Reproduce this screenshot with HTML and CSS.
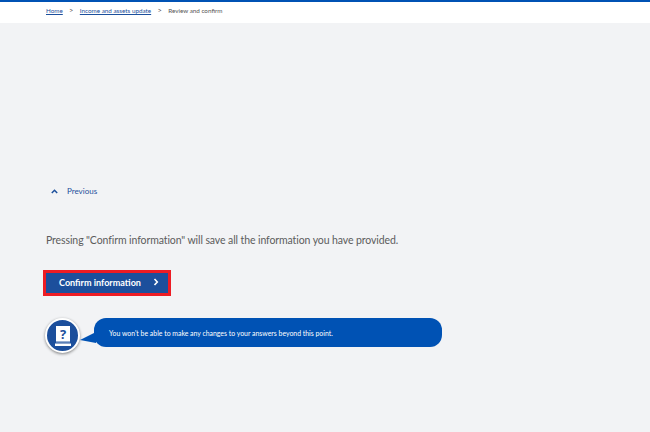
FILE: index.html
```html
<!DOCTYPE html>
<html lang="en">
<head>
<meta charset="utf-8">
<title>Review and confirm</title>
<link rel="stylesheet" href="styles.css">
</head>
<body>
<header class="topbar">
  <nav class="crumbs">
    <a href="#">Home</a><span class="sep">&gt;</span><a href="#">Income and assets update</a><span class="sep">&gt;</span><span class="current">Review and confirm</span>
  </nav>
</header>
<main class="content">
  <a class="prev" href="#">
    <svg class="prev-icon" width="7" height="5" viewBox="0 0 7 5"><path d="M.8 4 3.500 1.300 6.200 4" fill="none" stroke="#1c4f9c" stroke-width="1.500"/></svg>
    <span>Previous</span>
  </a>
  <p class="lead">Pressing "Confirm information" will save all the information you have provided.</p>
  <button class="btn">
    <span>Confirm information</span>
    <svg width="6" height="8" viewBox="0 0 6 8"><path d="M1.500 1 4.300 4 1.500 7" fill="none" stroke="#fff" stroke-width="1.600"/></svg>
  </button>
  <div class="helper">
    <div class="avatar">
      <svg width="20" height="24" viewBox="0 0 20 24">
        <path d="M3 2h14v15H3z" fill="#fff"/>
        <path d="M2 19.500h16v2.500H2z" fill="#fff"/>
        <path d="M3 17h14v1.500H3z" fill="#fff" opacity=".55"/>
        <text x="10" y="14.500" text-anchor="middle" class="q">?</text>
      </svg>
    </div>
    <div class="bubble">
      <svg class="tail" width="16" height="12" viewBox="0 0 16 12"><path d="M0 8 16 0v11z" fill="#0052b4"/></svg>
      You won't be able to make any changes to your answers beyond this point.
    </div>
  </div>
</main>
</body>
</html>
```
FILE: styles.css
```css
* { box-sizing: border-box; }
html, body { margin: 0; height: 100%; }
body { background: #f2f3f5; font-family: Lato, "Open Sans", sans-serif; overflow: hidden; }
.topbar { height: 23px; background: #fff; border-top: 2px solid #0052b4; padding: 4px 0 0 46px; }
.crumbs { display: flex; align-items: center; font-size: 6.300px; line-height: 10px; color: #555; }
.crumbs a { color: #1c4f9c; }
.sep { margin: 0 6px; width: 5px; text-align: center; font-size: 7.500px; }
.content { padding: 160px 0 0 46px; }
.prev { display: flex; align-items: center; gap: 9px; margin-left: 5px; height: 17px; padding-bottom: 1px; color: #1c4f9c; font-size: 8px; text-decoration: none; }
.lead { margin: 32px 0 0; font-size: 10.500px; letter-spacing: -.1px; line-height: 16px; color: #5c5c5c; }
.btn { display: flex; align-items: center; justify-content: space-between; margin: 22px 0 0 -3px; width: 128px; height: 26px; border: 3px solid #ed1c24; background: #1c4f9c; color: #fff; font: 700 9.050px Lato, "Open Sans", sans-serif; padding: 0 9px 2px 13px; }
.helper { display: flex; align-items: flex-start; margin-top: 22px; }
.avatar { width: 35px; height: 35px; margin-left: -1px; border-radius: 50%; background: #1c4f9c; border: 2px solid #fff; box-shadow: 0 1px 3px rgba(0,0,0,.45); display: flex; align-items: center; justify-content: center; flex: none; }
.q { font: 700 13px "Open Sans", sans-serif; fill: #1c4f9c; }
.bubble { position: relative; margin-left: 14px; width: 348px; height: 29px; border-radius: 12px; background: #0052b4; color: #fff; font-size: 6.900px; display: flex; align-items: center; padding-left: 15px; }
.tail { position: absolute; left: -14px; top: 14px; }
```
